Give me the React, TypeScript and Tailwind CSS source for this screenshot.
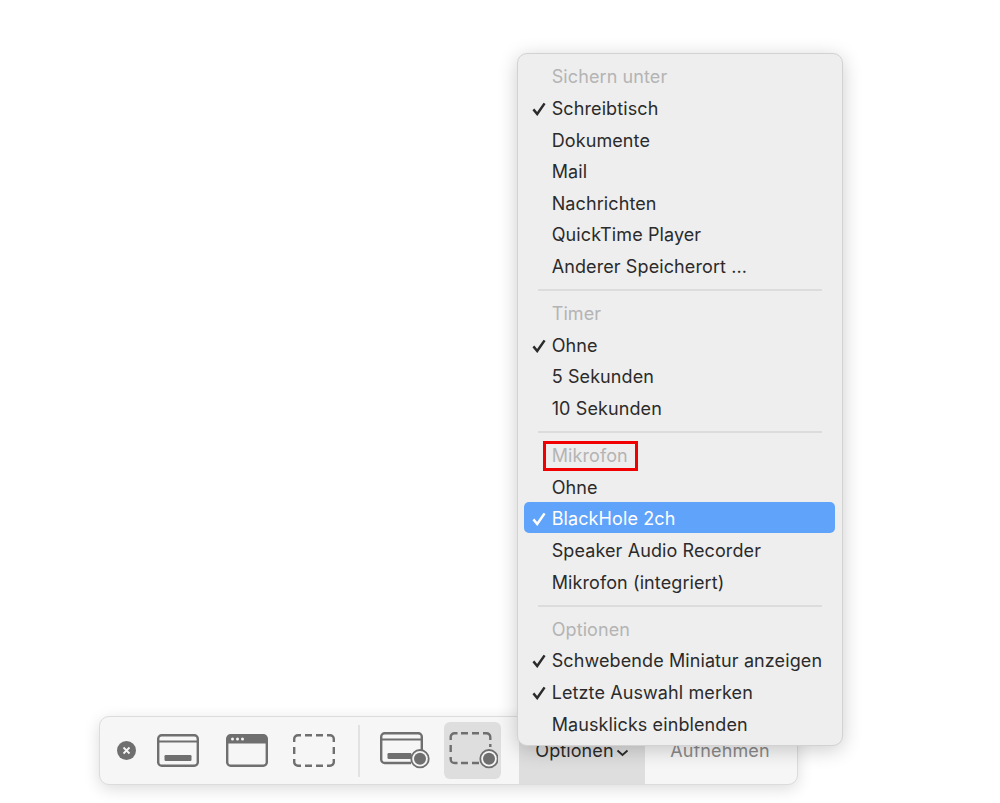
const sections = [
  {
    title: "Sichern unter",
    items: ["Schreibtisch", "Dokumente", "Mail", "Nachrichten", "QuickTime Player", "Anderer Speicherort ..."],
    checked: ["Schreibtisch"],
  },
  { title: "Timer", items: ["Ohne", "5 Sekunden", "10 Sekunden"], checked: ["Ohne"] },
  {
    title: "Mikrofon",
    items: ["Ohne", "BlackHole 2ch", "Speaker Audio Recorder", "Mikrofon (integriert)"],
    checked: ["BlackHole 2ch"],
    outlined: true,
  },
  {
    title: "Optionen",
    items: ["Schwebende Miniatur anzeigen", "Letzte Auswahl merken", "Mausklicks einblenden"],
    checked: ["Schwebende Miniatur anzeigen", "Letzte Auswahl merken"],
  },
];

function Check({ color }: { color: string }) {
  return (
    <svg width="14" height="14" viewBox="0 0 14 14" className="absolute left-[7.5px] top-[9px]">
      <path d="M1.4 7.4 L5.2 12 L12.6 1.4" fill="none" stroke={color} strokeWidth="2.5" />
    </svg>
  );
}

function ScreenIcon() {
  return (
    <svg width="42" height="33" viewBox="0 0 42 33" className="text-[#6f6f6f]">
      <rect x="1.2" y="1.2" width="39.6" height="30.6" rx="3.5" fill="none" stroke="currentColor" strokeWidth="2.4" />
      <path d="M1 7.5H41" stroke="currentColor" strokeWidth="2" />
      <rect x="7.5" y="21" width="27" height="6" rx="1.2" fill="currentColor" />
    </svg>
  );
}

function WindowIcon() {
  return (
    <svg width="42" height="33" viewBox="0 0 42 33" className="text-[#6f6f6f]">
      <rect x="1.2" y="1.2" width="39.6" height="30.6" rx="3.5" fill="none" stroke="currentColor" strokeWidth="2.4" />
      <path d="M1 4a3 3 0 0 1 3-3h34a3 3 0 0 1 3 3v5.5H1z" fill="currentColor" />
      <circle cx="6.5" cy="5" r="1.5" fill="#f6f6f6" />
      <circle cx="11.5" cy="5" r="1.5" fill="#f6f6f6" />
      <circle cx="16.5" cy="5" r="1.5" fill="#f6f6f6" />
    </svg>
  );
}

function SelectionIcon() {
  return (
    <svg width="42" height="33" viewBox="0 0 42 33" className="text-[#6f6f6f]">
      <path
        d="M1.2 8V5a3.8 3.8 0 0 1 3.8-3.8h3M12 1.2h7M23 1.2h7M34 1.2h3a3.8 3.8 0 0 1 3.8 3.8v3M40.8 13v7M40.8 25v3a3.8 3.8 0 0 1-3.8 3.8h-3M30 31.8h-7M19 31.8h-7M8 31.8H5A3.8 3.8 0 0 1 1.2 28v-3M1.2 20v-7"
        fill="none"
        stroke="currentColor"
        strokeWidth="2.4"
      />
    </svg>
  );
}

function RecordDot({ cx }: { cx: number }) {
  return (
    <>
      <circle cx={cx} cy="26.7" r="8.7" fill="#f6f6f6" stroke="currentColor" strokeWidth="1.8" />
      <circle cx={cx} cy="26.7" r="6" fill="currentColor" />
    </>
  );
}

function RecordScreenIcon() {
  return (
    <svg width="50" height="37" viewBox="0 0 50 37" className="text-[#6f6f6f]">
      <path d="M31 31H4.7a3.5 3.5 0 0 1-3.5-3.5V4.7a3.5 3.5 0 0 1 3.5-3.5h33.6a3.5 3.5 0 0 1 3.5 3.5V18" fill="none" stroke="currentColor" strokeWidth="2.4" />
      <path d="M1 7.5H42" stroke="currentColor" strokeWidth="2" />
      <rect x="7.5" y="21" width="24" height="6" rx="1.2" fill="currentColor" />
      <RecordDot cx={40} />
    </svg>
  );
}

function RecordSelectionIcon() {
  return (
    <svg width="50" height="37" viewBox="0 0 50 37" className="text-[#6f6f6f]">
      <path
        d="M2.7 8V5a3.8 3.8 0 0 1 3.8-3.8h3M13 1.2h7M24 1.2h7M35 1.2h3.5a3.8 3.8 0 0 1 3.8 3.8v3M42.3 12v3M2.7 13v7M2.7 25v2.2a3.8 3.8 0 0 0 3.8 3.8h3M13 31h7M24 31h7"
        fill="none"
        stroke="currentColor"
        strokeWidth="2.4"
      />
      <RecordDot cx={41} />
    </svg>
  );
}

function Toolbar() {
  return (
    <div className="ml-[99px] flex h-[69px] w-[699px] items-center rounded-[10px] border border-[#dcdcdc] bg-[#f6f6f6] tracking-[0.1px] shadow-[0_4px_16px_rgba(0,0,0,0.14)]">
      <div className="ml-[17px] flex h-[19px] w-[19px] items-center justify-center rounded-full bg-[#6f6f6f]">
        <svg width="9" height="9" viewBox="0 0 9 9">
          <path d="M1.5 1.5L7.5 7.5M7.5 1.5L1.5 7.5" stroke="#f6f6f6" strokeWidth="1.8" />
        </svg>
      </div>
      <div className="ml-[21px] flex items-center gap-[27px]">
        <ScreenIcon />
        <WindowIcon />
        <div className="-ml-[2px]">
          <SelectionIcon />
        </div>
      </div>
      <div className="ml-[23px] h-[52px] w-[2px] bg-[#e2e2e2]" />
      <div className="ml-[20px] mt-[-1px]">
        <RecordScreenIcon />
      </div>
      <div className="ml-[14px] flex h-[57px] w-[57px] items-center justify-center rounded-[6px] bg-[#dedede]">
        <RecordSelectionIcon />
      </div>
      <div className="ml-[18px] flex h-full w-[126px] items-center justify-center bg-[#dedede] text-[#2b2b2b]">
        Optionen
        <svg width="13" height="8" viewBox="0 0 13 8" className="ml-[2px] mt-[5px]">
          <path d="M1.5 1.5L6.5 6L11.5 1.5" fill="none" stroke="#2b2b2b" strokeWidth="1.8" />
        </svg>
      </div>
      <div className="flex h-full flex-1 items-center justify-center pr-[2px] text-[#8a8a8a]">Aufnehmen</div>
    </div>
  );
}

function Menu() {
  return (
    <div className="absolute left-[516.7px] top-[53px] w-[326px] rounded-[10px] border border-[#d2d2d2] bg-[#eeeeee] px-[7px] pb-[4.8px] pt-[7.2px] tracking-[0.1px] shadow-[0_4px_20px_rgba(0,0,0,0.2)]">
      {sections.map((section, i) => (
        <div key={section.title}>
          {i > 0 && (
            <div className="flex h-[15.6px] items-center px-[13px]">
              <div className="h-[2px] w-full bg-[#dcdcdc]" />
            </div>
          )}
          <div className="relative flex h-[31.6px] items-center pl-[27px] text-[#b4b4b4]">
            {section.title}
            {section.outlined && (
              <div className="absolute left-[18px] top-[1px] h-[30px] w-[95px] border-[3px] border-[#f00000]" />
            )}
          </div>
          {section.items.map((item) => {
            const selected = item === "BlackHole 2ch";
            return (
              <div
                key={item}
                className={`relative flex h-[31.6px] items-center pl-[27px] ${
                  selected ? "text-white" : "text-[#2b2b2b]"
                }`}
              >
                {selected && (
                  <div className="absolute left-[-0.6px] right-0 top-[-0.9px] h-[31px] rounded-[5px] bg-[#5fa3fb]" />
                )}
                {section.checked.includes(item) && (
                  <div className="absolute inset-0">
                    <Check color={selected ? "#ffffff" : "#2b2b2b"} />
                  </div>
                )}
                <span className="relative">{item}</span>
              </div>
            );
          })}
        </div>
      ))}
    </div>
  );
}

export default function App() {
  return (
    <div className="relative h-[803px] w-[1000px] overflow-hidden bg-white pt-[716px] font-['Inter',sans-serif] text-[18px]">
      <Toolbar />
      <Menu />
    </div>
  );
}
